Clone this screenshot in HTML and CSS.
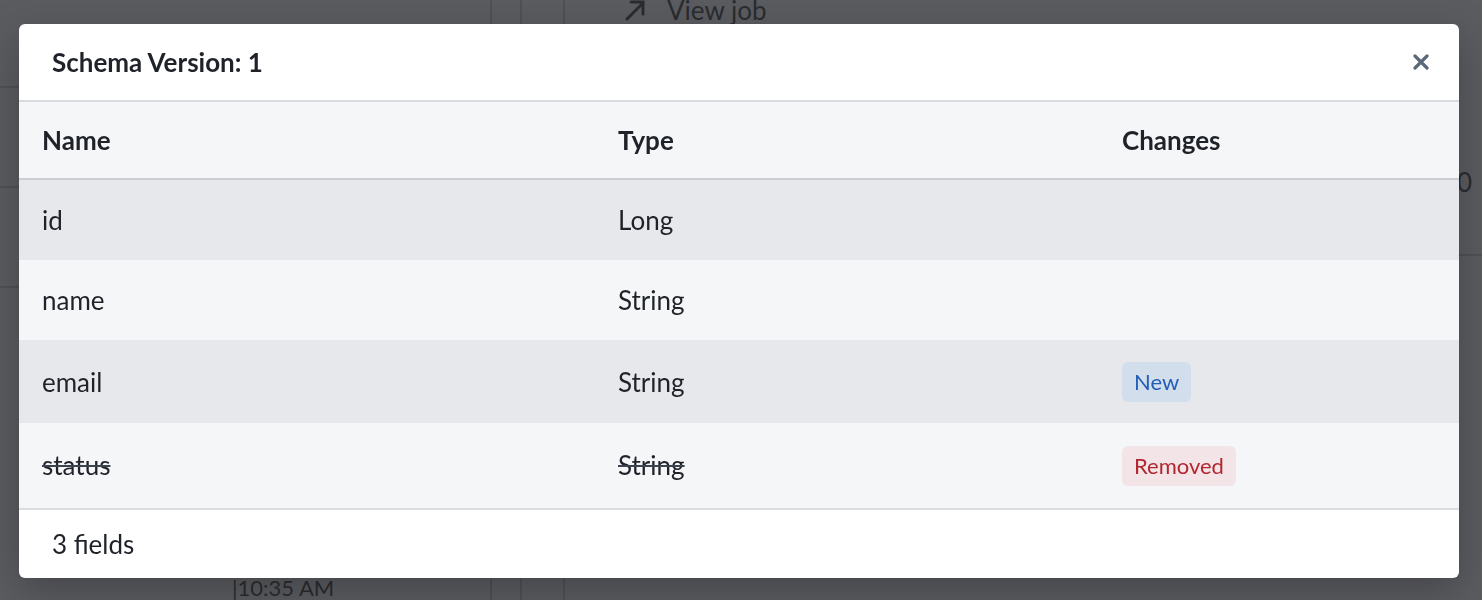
FILE: index.html
```html
<!DOCTYPE html>
<html lang="en">

<head>
    <meta charset="UTF-8">
    <meta name="viewport" content="width=device-width, initial-scale=1.0">
    <title>Schema Version</title>
    <link rel="stylesheet" href="styles.css">
</head>

<body>

<div class="page">
    <div class="col col-main">
        <div class="row-line"></div>
        <div class="row-line"></div>
        <div class="row-line"></div>
        <div class="time">|10:35 AM</div>
    </div>
    <div class="col col-narrow"></div>
    <div class="col col-gap"></div>
    <div class="col col-side">
        <a class="view-job" href="#">
            <svg width="24" height="24" viewBox="0 0 24 24"><path d="M4 21 L20 5 M8 4 H20 V16" fill="none" stroke="currentColor" stroke-width="3" stroke-linecap="round"/></svg>
            View job
        </a>
        <div class="side-row">0</div>
    </div>
</div>

<div class="overlay">
    <div class="modal">
        <div class="modal-header">
            <h2>Schema Version: 1</h2>
            <button class="close" aria-label="Close">
                <svg width="16" height="16" viewBox="0 0 16 16"><path d="M2 2 L14 14 M14 2 L2 14" stroke="currentColor" stroke-width="3.2" stroke-linecap="round"/></svg>
            </button>
        </div>

        <table class="schema">
            <thead>
                <tr>
                    <th class="c-name">Name</th>
                    <th class="c-type">Type</th>
                    <th class="c-changes">Changes</th>
                </tr>
            </thead>
            <tbody>
                <tr>
                    <td>id</td>
                    <td>Long</td>
                    <td></td>
                </tr>
                <tr>
                    <td>name</td>
                    <td>String</td>
                    <td></td>
                </tr>
                <tr class="has-badge">
                    <td>email</td>
                    <td>String</td>
                    <td><span class="badge badge-new">New</span></td>
                </tr>
                <tr class="has-badge removed">
                    <td><s>status</s></td>
                    <td><s>String</s></td>
                    <td><span class="badge badge-removed">Removed</span></td>
                </tr>
            </tbody>
        </table>

        <div class="modal-footer">3 fields</div>
    </div>
</div>

</body>
</html>
```

FILE: styles.css
```css
* {
    box-sizing: border-box;
}

body {
    margin: 0;
    height: 600px;
    overflow: hidden;
    font-family: 'Lato', 'Liberation Sans', sans-serif;
    font-size: 26px;
    color: #1f2329;
    background-color: #5b5c60;
}

/* page behind the dialog, dimmed */
.page {
    display: flex;
    height: 600px;
    color: #2a2c30;
}

.col {
    border-right: 2px solid #505155;
}

.col-main {
    width: 492px;
    display: flex;
    flex-direction: column;
    padding-top: 86px;
}

.row-line {
    height: 100px;
    border-top: 2px solid #505155;
}

.time {
    margin-top: auto;
    padding-left: 232px;
    height: 24px;
    font-size: 22px;
    line-height: 24px;
}

.col-narrow {
    width: 30px;
}

.col-gap {
    width: 43px;
}

.col-side {
    flex: 1;
    border-right: none;
}

.view-job {
    display: flex;
    align-items: center;
    gap: 20px;
    margin: -6px 0 0 58px;
    color: #2a2c30;
    text-decoration: none;
    font-size: 26px;
}

.side-row {
    text-align: right;
    margin-top: 140px;
    padding-right: 10px;
    padding-bottom: 56px;
    border-bottom: 2px solid #505155;
}

/* dialog */
.overlay {
    position: fixed;
    inset: 0;
    padding: 24px 23px 0 19px;
}

.modal {
    background-color: #fff;
    border-radius: 6px;
    overflow: hidden;
    box-shadow: 0 12px 40px rgba(0, 0, 0, 0.25);
}

.modal-header {
    height: 78px;
    display: flex;
    align-items: center;
    justify-content: space-between;
    padding: 0 30px 0 33px;
    border-bottom: 2px solid #d9dadd;
}

.modal-header h2 {
    margin: 0;
    font-size: 26px;
    font-weight: bold;
}

.close {
    border: none;
    background: none;
    padding: 0;
    color: #5d6878;
    cursor: pointer;
    display: flex;
}

.schema {
    width: 100%;
    border-collapse: separate;
    border-spacing: 0;
    table-layout: fixed;
}

.schema th,
.schema td {
    text-align: left;
    padding: 22px 23px;
    line-height: 36px;
}

.schema th {
    font-weight: bold;
    background-color: #f5f6f8;
    padding: 20px 23px;
    border-bottom: 2px solid #cdced2;
}

.c-name {
    width: 40%;
}

.c-type {
    width: 35%;
}

.schema tbody tr:nth-child(odd) {
    background-color: #e7e8eb;
}

.schema tbody tr:nth-child(even) {
    background-color: #f5f6f8;
}

.schema .has-badge td {
    padding-top: 21px;
    padding-bottom: 21px;
}

.schema .removed td {
    padding-bottom: 22px;
}

.removed s {
    text-decoration-thickness: 2px;
    text-decoration-color: #3c4350;
}

.badge {
    display: inline-block;
    vertical-align: middle;
    padding: 2px 12px;
    border-radius: 6px;
    line-height: 36px;
    font-size: 22px;
}

.badge-new {
    background-color: #d3deed;
    color: #2260b8;
}

.badge-removed {
    background-color: #f2e4e7;
    color: #b3262f;
}

.modal-footer {
    height: 70px;
    display: flex;
    align-items: center;
    padding: 0 33px;
    border-top: 2px solid #dcdcde;
}
```
